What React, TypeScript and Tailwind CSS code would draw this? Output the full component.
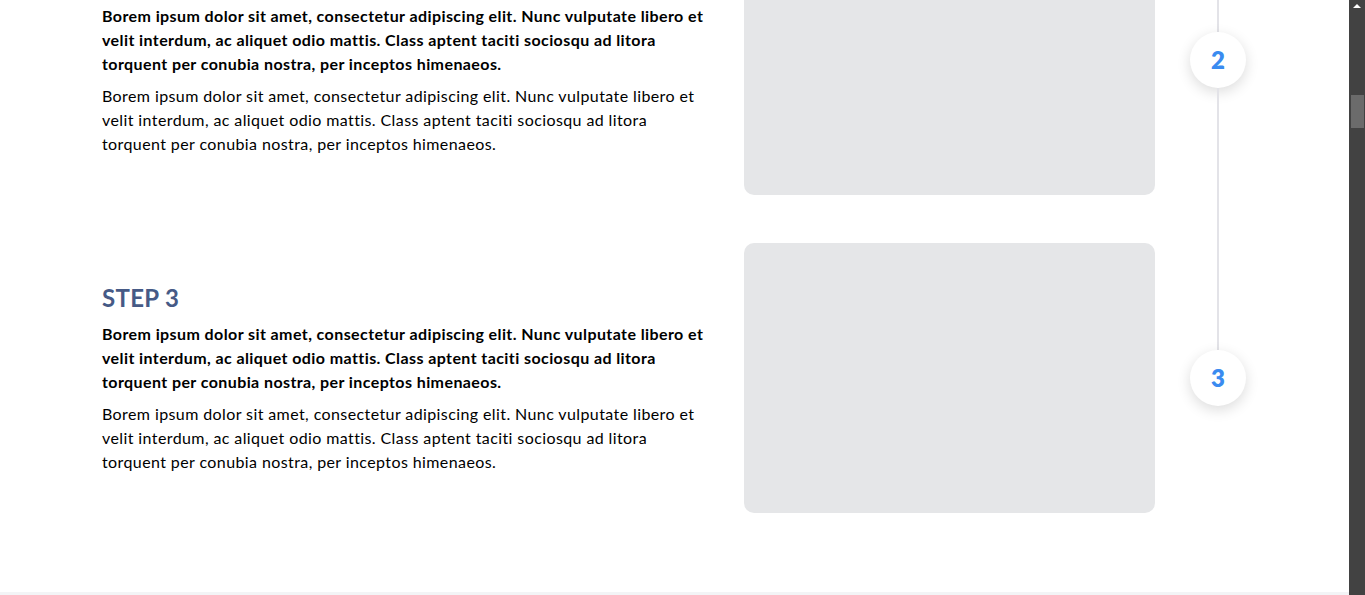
import React from 'react';

const bold =
  'Borem ipsum dolor sit amet, consectetur adipiscing elit. Nunc vulputate libero et velit interdum, ac aliquet odio mattis. Class aptent taciti sociosqu ad litora torquent per conubia nostra, per inceptos himenaeos.';
const body =
  'Borem ipsum dolor sit amet, consectetur adipiscing elit. Nunc vulputate libero et velit interdum, ac aliquet odio mattis. Class aptent taciti sociosqu ad litora torquent per conubia nostra, per inceptos himenaeos.';

function Step({ n, last }: { n: number; last?: boolean }) {
  return (
    <div className="flex items-center">
      <div className="w-[606px] shrink-0">
        <h3 className="text-[24px] leading-8 font-bold text-[#465a86] mb-2 tracking-[0.3px]">STEP {n}</h3>
        <p className="text-[16px] leading-6 font-bold text-black tracking-[0.41px]">{bold}</p>
        <p className="mt-2 text-[16px] leading-6 text-black tracking-[0.4px]">{body}</p>
      </div>
      <div className="ml-[36px] w-[411px] h-[270px] shrink-0 rounded-[10px] bg-[#e5e6e8]" />
      <div className="ml-[35px] w-[56px] h-[318px] -mt-[48px] shrink-0 flex flex-col items-center">
        <div className="w-[2px] h-[155px] shrink-0 bg-[#e3e3e8]" />
        <div className="w-[56px] h-[56px] shrink-0 rounded-full bg-white shadow-[0_4px_14px_rgba(0,0,0,0.14)] flex items-center justify-center text-[24px] font-extrabold text-[#3a8bf0]">
          {n}
        </div>
        {!last && <div className="w-[2px] flex-1 bg-[#e3e3e8]" />}
      </div>
    </div>
  );
}

export default function App() {
  return (
    <div className="flex h-[595px] overflow-hidden bg-white" style={{ fontFamily: 'Lato, "Noto Sans", sans-serif' }}>
      <div className="flex-1 flex flex-col overflow-hidden">
        <div className="pl-[102px] -mt-[75px] flex flex-col gap-[48px]">
          <Step n={2} />
          <Step n={3} last />
        </div>
        <div className="flex-1" />
        <div className="h-[3px] bg-[#f3f4f6]" />
      </div>
      <div className="w-[16px] shrink-0 bg-[#424242] flex flex-col items-center">
        <div className="mt-[4px] w-0 h-0 border-l-[4px] border-r-[4px] border-b-[4px] border-l-transparent border-r-transparent border-b-white" />
        <div className="mt-[87px] w-[13px] h-[33px] bg-[#6b6b6b]" />
      </div>
    </div>
  );
}
